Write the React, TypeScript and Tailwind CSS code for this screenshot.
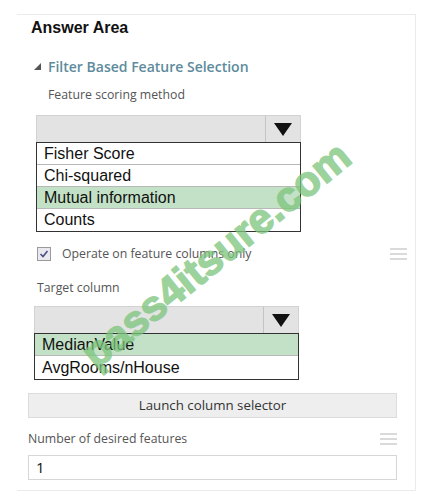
import React from "react";

const Hamburger = () => (
  <div className="flex flex-col gap-[3px]">
    <div className="h-[2px] w-[17px] bg-[#dadada]" />
    <div className="h-[2px] w-[17px] bg-[#dadada]" />
    <div className="h-[2px] w-[17px] bg-[#dadada]" />
  </div>
);

const Dropdown = () => (
  <div className="flex h-[28px] w-[265px] bg-[#e3e3e3] border border-[#d2d2d2]">
    <div className="flex-1" />
    <div className="w-[35px] border-l border-[#c4c4c4] flex items-center justify-center">
      <svg width="20" height="15" viewBox="0 0 20 15">
        <polygon points="1,1 19,1 10,14" fill="#111" />
      </svg>
    </div>
  </div>
);

const Row = ({ text, green, last }: { text: string; green?: boolean; last?: boolean }) => (
  <div
    className={`h-[22px] flex items-center pl-[7px] text-[16px] text-[#111] ${
      green ? "bg-[#c3e1c6]" : "bg-white"
    } ${last ? "" : "border-b border-[#b8b8b8]"}`}
    style={{ fontFamily: '"Liberation Sans", Arial, sans-serif' }}
  >
    {text}
  </div>
);

export default function App() {
  const seg = { fontFamily: '"Open Sans", "Noto Sans", sans-serif' };
  return (
    <div className="relative w-[427px] h-[499px] bg-white overflow-hidden">
      <div className="ml-[17px] mt-[14px] w-[399px] h-[477px] border-t border-r border-b border-[#ebebeb]">
        <div
          className="mt-[3px] pl-[14px] h-[20px] leading-[20px] text-[16px] font-bold text-[#111]"
          style={{ fontFamily: '"Liberation Sans", Arial, sans-serif' }}
        >
          Answer Area
        </div>
        <div className="mt-[18px] pl-[16px] h-[20px] flex items-center gap-[6px]" style={seg}>
          <svg width="9" height="9" viewBox="0 0 9 9">
            <polygon points="8,1 8,8 1,8" fill="#555" />
          </svg>
          <span className="text-[14px] text-[#5d8b9c] font-semibold">Filter Based Feature Selection</span>
        </div>
        <div className="mt-[10px] pl-[31px] h-[18px] leading-[18px] text-[12.3px] text-[#555]" style={seg}>
          Feature scoring method
        </div>
        <div className="mt-[11px] ml-[19px]">
          <Dropdown />
          <div className="w-[265px] border border-[#333] -mt-[1px]">
            <Row text="Fisher Score" />
            <Row text="Chi-squared" />
            <Row text="Mutual information" green />
            <Row text="Counts" last />
          </div>
        </div>
        <div className="mt-[14px] ml-[20px] mr-[8px] h-[16px] flex items-center">
          <div className="w-[14px] h-[14px] border border-[#9a9a9a] bg-[#e9e9ef] flex items-center justify-center">
            <svg width="10" height="10" viewBox="0 0 10 10">
              <polyline points="1.5,5 4,7.5 8.5,2" fill="none" stroke="#4a4f80" strokeWidth="1.6" />
            </svg>
          </div>
          <span className="ml-[11px] text-[12.3px] text-[#555] flex-1" style={seg}>
            Operate on feature columns only
          </span>
          <Hamburger />
        </div>
        <div className="mt-[17px] pl-[20px] h-[18px] leading-[18px] text-[12.3px] text-[#555]" style={seg}>
          Target column
        </div>
        <div className="mt-[9px] ml-[17px]">
          <Dropdown />
          <div className="w-[265px] border border-[#333] -mt-[1px]">
            <Row text="MedianValue" green />
            <div
              className="h-[23px] flex items-center pl-[7px] text-[16px] text-[#111] bg-white"
              style={{ fontFamily: '"Liberation Sans", Arial, sans-serif' }}
            >
              AvgRooms/nHouse
            </div>
          </div>
        </div>
        <div
          className="mt-[13px] ml-[11px] w-[369px] h-[25px] bg-[#eeeeee] border border-[#dcdcdc] flex items-center justify-center text-[13.3px] text-[#333]"
          style={seg}
        >
          Launch column selector
        </div>
        <div className="mt-[12px] ml-[11px] w-[369px] h-[18px] flex items-center justify-between">
          <span className="text-[12.3px] text-[#555]" style={seg}>
            Number of desired features
          </span>
          <Hamburger />
        </div>
        <div
          className="mt-[7px] ml-[11px] w-[369px] h-[25px] border border-[#d6d6d6] bg-white flex items-center pl-[7px] text-[15px] text-[#111]"
          style={seg}
        >
          1
        </div>
      </div>
      <div
        className="absolute left-[50px] top-[223px] text-[42px] font-bold text-[#7cc47c] opacity-75 pointer-events-none whitespace-nowrap"
        style={{
          fontFamily: '"Liberation Sans", Arial, sans-serif',
          transform: "rotate(-39deg)",
          transformOrigin: "center",
          WebkitTextStroke: "1.5px #7cc47c",
        }}
      >
        pass4itsure.com
      </div>
    </div>
  );
}
